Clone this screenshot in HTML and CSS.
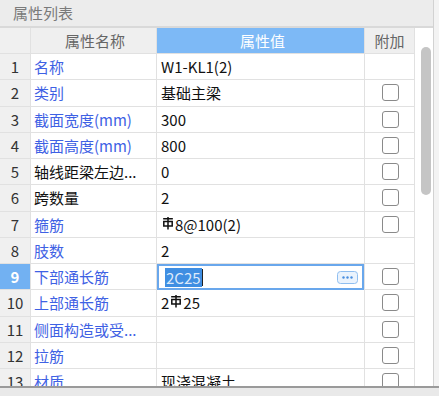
FILE: index.html
```html
<!DOCTYPE html>
<html lang="zh-CN">
<head>
	<meta charset="UTF-8">
	<title>属性列表</title>
	<link rel="stylesheet" href="styles.css">
</head>
<body>
	<div class="panel">
		<div class="title">属性列表</div>
		<div class="main">
			<div class="grid">
				<div class="row head">
					<div class="num"></div>
					<div class="name">属性名称</div>
					<div class="val">属性值</div>
					<div class="add">附加</div>
				</div>
				<div class="row">
					<div class="num">1</div>
					<div class="name blue">名称</div>
					<div class="val">W1-KL1(2)</div>
					<div class="add"></div>
				</div>
				<div class="row">
					<div class="num">2</div>
					<div class="name blue">类别</div>
					<div class="val">基础主梁</div>
					<div class="add"><span class="chk"></span></div>
				</div>
				<div class="row">
					<div class="num">3</div>
					<div class="name blue">截面宽度(mm)</div>
					<div class="val">300</div>
					<div class="add"><span class="chk"></span></div>
				</div>
				<div class="row">
					<div class="num">4</div>
					<div class="name blue">截面高度(mm)</div>
					<div class="val">800</div>
					<div class="add"><span class="chk"></span></div>
				</div>
				<div class="row">
					<div class="num">5</div>
					<div class="name">轴线距梁左边...</div>
					<div class="val">0</div>
					<div class="add"><span class="chk"></span></div>
				</div>
				<div class="row">
					<div class="num">6</div>
					<div class="name">跨数量</div>
					<div class="val">2</div>
					<div class="add"><span class="chk"></span></div>
				</div>
				<div class="row">
					<div class="num">7</div>
					<div class="name blue">箍筋</div>
					<div class="val"><svg class="bar" viewBox="0 0 11 13"><path d="M1 2.5H10M5.5 1V12.5M1.6 5.2H9.4V9.2H1.6Z" fill="none" stroke="#111" stroke-width="1.4"/></svg>8@100(2)</div>
					<div class="add"><span class="chk"></span></div>
				</div>
				<div class="row">
					<div class="num">8</div>
					<div class="name blue">肢数</div>
					<div class="val">2</div>
					<div class="add"></div>
				</div>
				<div class="row">
					<div class="num on">9</div>
					<div class="name blue">下部通长筋</div>
					<div class="val edit">
						<div class="editor">
							<span class="sel">2C25</span><span class="caret"></span>
							<svg class="more" viewBox="0 0 21 13"><rect x="0.5" y="0.5" width="20" height="12" rx="3" fill="#eaf3fd" stroke="#8fbef0"/><circle cx="6.5" cy="6.5" r="1.2" fill="#4a8fe0"/><circle cx="10.5" cy="6.5" r="1.2" fill="#4a8fe0"/><circle cx="14.5" cy="6.5" r="1.2" fill="#4a8fe0"/></svg>
						</div>
					</div>
					<div class="add"><span class="chk"></span></div>
				</div>
				<div class="row">
					<div class="num">10</div>
					<div class="name blue">上部通长筋</div>
					<div class="val">2<svg class="bar" viewBox="0 0 11 13"><path d="M1 2.5H10M5.5 1V12.5M1.6 5.2H9.4V9.2H1.6Z" fill="none" stroke="#111" stroke-width="1.4"/></svg>25</div>
					<div class="add"><span class="chk"></span></div>
				</div>
				<div class="row">
					<div class="num">11</div>
					<div class="name blue">侧面构造或受...</div>
					<div class="val"></div>
					<div class="add"><span class="chk"></span></div>
				</div>
				<div class="row">
					<div class="num">12</div>
					<div class="name blue">拉筋</div>
					<div class="val"></div>
					<div class="add"><span class="chk"></span></div>
				</div>
				<div class="row">
					<div class="num">13</div>
					<div class="name blue">材质</div>
					<div class="val">现浇混凝土</div>
					<div class="add"><span class="chk"></span></div>
				</div>
			</div>
			<div class="scroll"><div class="thumb"></div></div>
		</div>
	</div>
	<div class="foot"></div>
</body>
</html>
```

FILE: styles.css
```css
body{
	margin: 0;
	width: 439px;
	height: 396px;
	overflow: hidden;
	background: #f3f3f3;
	font-family: "Noto Sans CJK SC", "Noto Sans", sans-serif;
	font-size: 15px;
	color: #111;
}
.panel{
	width: 433px;
	height: 386px;
	background: #fff;
	border-right: 1px solid #d2d2d2;
	display: flex;
	flex-direction: column;
}
.title{
	height: 26px;
	line-height: 26px;
	padding-left: 13px;
	background: #ececec;
	border-bottom: 2px solid #d9d9d9;
	color: #7a7a7a;
}
.main{
	flex: 1;
	display: flex;
	overflow: hidden;
}
.grid{
	width: 415px;
	flex: none;
	overflow: hidden;
}
.row{
	display: grid;
	grid-template-columns: 31px 126px 208px 50px;
	height: 26.25px;
	box-sizing: border-box;
	border-bottom: 1px solid #e1e1e1;
}
.row > div{
	border-right: 1px solid #e1e1e1;
	display: flex;
	align-items: center;
	white-space: nowrap;
	overflow: hidden;
	line-height: 1;
}
.row.head{
	height: 26px;
	background: #efefef;
	color: #666;
}
.head > div{
	justify-content: center;
}
.head .val{
	background: #7db9f6;
	color: #fff;
}
.num{
	justify-content: center;
	background: #f0f0f0;
	color: #333;
}
.num.on{
	background: #72b1f2;
	color: #fff;
	font-weight: bold;
}
.name{
	padding-left: 3px;
}
.blue{
	color: #3e61e4;
}
.val{
	padding-left: 4px;
}
.add{
	justify-content: center;
}
.chk{
	width: 15px;
	height: 15px;
	border: 1px solid #8a8a8a;
	border-radius: 3px;
	margin-left: 1px;
}
.bar{
	width: 12px;
	height: 14px;
	margin: 0 1px 3px 1px;
}
.row > .edit{
	padding: 0;
	overflow: visible;
}
.editor{
	flex: 1;
	align-self: stretch;
	margin-bottom: -1px;
	border: 2px solid #69a7ec;
	display: flex;
	align-items: center;
	padding-left: 6px;
}
.sel{
	background: #3f8ee2;
	color: #dce9fb;
	padding: 2px 1px;
}
.caret{
	width: 1px;
	height: 17px;
	background: #222;
}
.more{
	margin-left: auto;
	margin-right: 4px;
	width: 21px;
	height: 13px;
}
.scroll{
	flex: 1;
	padding: 19px 0 0 6px;
}
.thumb{
	width: 10px;
	height: 148px;
	border-radius: 5px;
	background: #c5c5c5;
}
.foot{
	height: 8px;
	border-top: 2px solid #9a9a9a;
	background: #e9e9e9;
}
```
